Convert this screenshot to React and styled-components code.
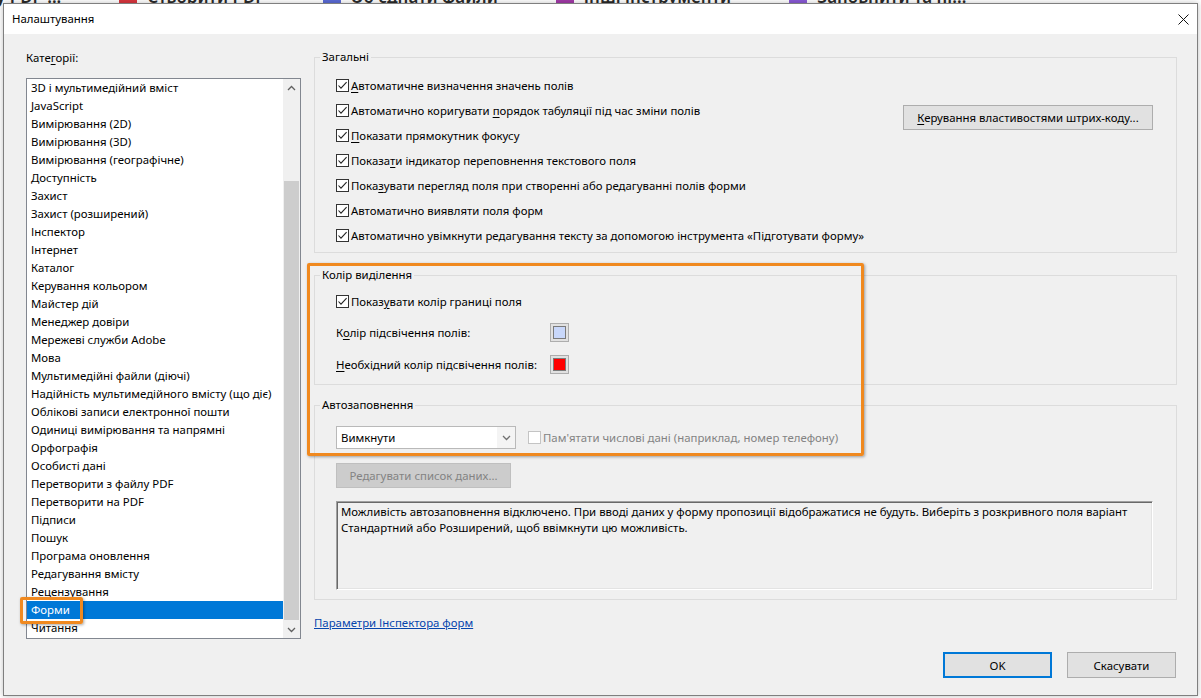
import React from "react";
import styled, { createGlobalStyle } from "styled-components";

const UI_FONT = `"Noto Sans", "Segoe UI", Arial, sans-serif`;

const GlobalStyle = createGlobalStyle`
  html, body { margin: 0; padding: 0; background: #ffffff; }
  body { font-family: ${UI_FONT}; font-size: 11.4px; color: #000; }
  *, *::before, *::after { box-sizing: border-box; }
`;

/* ---------- desktop behind the dialog ---------- */

const Desktop = styled.div`
  position: relative;
  width: 1201px;
  height: 698px;
  overflow: hidden;
  background: #ffffff;
`;

const ToolStrip = styled.div`
  position: absolute;
  top: -15px;
  left: -4px;
  display: flex;
  align-items: center;
  gap: 58px;
  white-space: nowrap;
  font: 600 17px ${UI_FONT};
  color: #2b2b2b;
`;

const ToolItem = styled.span`
  display: inline-flex;
  align-items: center;
  gap: 10px;
`;

const ToolGlyph = styled.span`
  width: 18px;
  height: 16px;
  background: ${(p) => p.$color};
  border-radius: 2px;
`;

/* ---------- dialog window ---------- */

const Window = styled.div`
  position: absolute;
  left: 3px;
  top: 3px;
  width: 1195px;
  height: 693px;
  display: flex;
  flex-direction: column;
  background: #f0f0f0;
  border: 1px solid #7f7f7f;
  box-shadow: 0 0 6px rgba(0, 0, 0, 0.25);
`;

const TitleBar = styled.div`
  height: 30px;
  flex: none;
  display: flex;
  align-items: center;
  justify-content: space-between;
  padding: 0 8px 0 8px;
  background: #ffffff;
`;

const Title = styled.span`
  line-height: 16px;
  margin-top: -1px;
`;

const Body = styled.div`
  flex: 1;
  display: flex;
  padding: 16px 20px 0 22px;
  min-height: 0;
`;

const Sidebar = styled.div`
  width: 275px;
  flex: none;
  display: flex;
  flex-direction: column;
`;

const Label = styled.div`
  line-height: 16px;
`;

const ListBox = styled.div`
  margin-top: 12px;
  height: 561px;
  display: flex;
  background: #ffffff;
  border: 1px solid #828790;
`;

const Items = styled.ul`
  flex: 1;
  margin: 0;
  padding: 0;
  list-style: none;
  overflow: hidden;
`;

const Item = styled.li`
  height: 18px;
  line-height: 18px;
  padding-left: 4px;
  white-space: nowrap;
  color: ${(p) => (p.$selected ? "#ffffff" : "#000000")};
  background: ${(p) => (p.$selected ? "#0078d7" : "transparent")};
`;

const ScrollBar = styled.div`
  width: 17px;
  flex: none;
  display: flex;
  flex-direction: column;
  background: #f0f0f0;
`;

const ScrollArrow = styled.div`
  height: 17px;
  flex: none;
  display: flex;
  align-items: center;
  justify-content: center;
`;

const ScrollTrack = styled.div`
  flex: 1;
  display: flex;
  flex-direction: column;
  padding: 85px 1px 1px 1px;
`;

const ScrollThumb = styled.div`
  flex: 1;
  background: #cdcdcd;
`;

const Main = styled.div`
  flex: 1;
  margin-left: 13px;
  margin-top: -1px;
  display: flex;
  flex-direction: column;
`;

const Group = styled.fieldset`
  margin: ${(p) => p.$gap || 0}px 0 0 0;
  padding: 0;
  min-width: 0;
  border: 1px solid #dcdcdc;
`;

const Legend = styled.legend`
  margin-left: 5px;
  padding: 0 2px;
  line-height: 16px;
`;

const GroupBody = styled.div`
  padding: ${(p) => p.$pad || "8px 23px 4px 21px"};
  display: flex;
  flex-direction: ${(p) => (p.$row ? "row" : "column")};
  justify-content: ${(p) => (p.$row ? "space-between" : "flex-start")};
  align-items: flex-start;
`;

const Stack = styled.div`
  display: flex;
  flex-direction: column;
`;

const CheckRow = styled.label`
  height: 25px;
  display: flex;
  align-items: center;
  gap: 2px;
  white-space: nowrap;
  color: ${(p) => (p.$disabled ? "#838383" : "#000")};
`;

const Box = styled.span`
  width: 13px;
  height: 13px;
  flex: none;
  display: inline-flex;
  align-items: center;
  justify-content: center;
  background: #ffffff;
  border: 1px solid ${(p) => (p.$disabled ? "#c4c4c4" : "#333333")};
`;

const Key = styled.span`
  text-decoration: underline;
  text-underline-offset: 2px;
`;

const Button = styled.div`
  height: ${(p) => p.$h || 25}px;
  width: ${(p) => (p.$w ? `${p.$w}px` : "auto")};
  padding: 0 ${(p) => (p.$w ? 0 : 10)}px;
  display: inline-flex;
  align-items: center;
  justify-content: center;
  white-space: nowrap;
  background: ${(p) => (p.$disabled ? "#cccccc" : "#e1e1e1")};
  color: ${(p) => (p.$disabled ? "#838383" : "#000")};
  border: 1px solid
    ${(p) => (p.$default ? "#0078d7" : p.$disabled ? "#bfbfbf" : "#adadad")};
  box-shadow: ${(p) => (p.$default ? "inset 0 0 0 1px #0078d7" : "none")};
`;

const BarcodeButton = styled(Button)`
  margin-top: 32px;
  width: 250px;
`;

const ColorRow = styled.div`
  height: 32px;
  display: flex;
  align-items: center;
  margin-top: ${(p) => p.$gap || 0}px;
`;

const ColorLabel = styled.span`
  width: 214px;
  flex: none;
`;

const Swatch = styled.span`
  width: 19px;
  height: 19px;
  display: inline-flex;
  align-items: center;
  justify-content: center;
  background: #e1e1e1;
  border: 1px solid #adadad;
`;

const SwatchFill = styled.span`
  width: 13px;
  height: 13px;
  background: ${(p) => p.$color};
  border: 1px solid #7a7a7a;
`;

const ComboRow = styled.div`
  display: flex;
  align-items: center;
  gap: 12px;
`;

const Combo = styled.div`
  width: 180px;
  height: 23px;
  display: flex;
  align-items: stretch;
  background: #ffffff;
  border: 1px solid #b9b9b9;
`;

const ComboText = styled.span`
  flex: 1;
  display: flex;
  align-items: center;
  padding-left: 4px;
`;

const ComboArrow = styled.span`
  width: 18px;
  flex: none;
  display: flex;
  align-items: center;
  justify-content: center;
  background: #f4f4f4;
`;

const EditButton = styled(Button)`
  margin-top: 13px;
  width: 175px;
`;

const Notes = styled.div`
  margin-top: 13px;
  align-self: stretch;
  height: 89px;
  padding: 2px 4px;
  line-height: 16px;
  white-space: nowrap;
  overflow: hidden;
  background: #f0f0f0;
  border: 1px solid;
  border-color: #a0a0a0 #ffffff #ffffff #a0a0a0;
  box-shadow: inset 1px 1px 0 #696969, inset -1px -1px 0 #e3e3e3;
`;

const Link = styled.a`
  margin-top: 15px;
  line-height: 16px;
  color: #0645ad;
  text-decoration: underline;
  align-self: flex-start;
  cursor: pointer;
`;

const Footer = styled.div`
  flex: none;
  display: flex;
  justify-content: flex-end;
  gap: 15px;
  padding: 0 21px 17px 0;
`;

/* orange callouts drawn over the dialog */
const Callout = styled.div`
  position: absolute;
  left: ${(p) => p.$x}px;
  top: ${(p) => p.$y}px;
  width: ${(p) => p.$w}px;
  height: ${(p) => p.$h}px;
  border: 3px solid #f0891f;
  border-radius: 2px;
  box-shadow: 1px 1px 3px rgba(0, 0, 0, 0.35);
  pointer-events: none;
`;

/* ---------- small drawings ---------- */

const CheckMark = () => (
  <svg width="11" height="11" viewBox="0 0 11 11">
    <polyline
      points="1.5,5.5 4,8.2 9.6,2.2"
      fill="none"
      stroke="#222"
      strokeWidth="1.1"
    />
  </svg>
);

const Chevron = ({ up, color = "#606060" }) => (
  <svg width="9" height="6" viewBox="0 0 9 6">
    <polyline
      points={up ? "1,5 4.5,1.5 8,5" : "1,1 4.5,4.5 8,1"}
      fill="none"
      stroke={color}
      strokeWidth="1.3"
    />
  </svg>
);

const CloseIcon = () => (
  <svg width="11" height="11" viewBox="0 0 11 11" style={{ marginTop: 1 }}>
    <path d="M0.5 0.5 L10.5 10.5 M10.5 0.5 L0.5 10.5" stroke="#111" strokeWidth="1" />
  </svg>
);

const Check = ({ children, disabled, checked = true }) => (
  <CheckRow $disabled={disabled}>
    <Box $disabled={disabled}>{checked && <CheckMark />}</Box>
    <span>{children}</span>
  </CheckRow>
);

const categories = [
  "3D і мультимедійний вміст",
  "JavaScript",
  "Вимірювання (2D)",
  "Вимірювання (3D)",
  "Вимірювання (географічне)",
  "Доступність",
  "Захист",
  "Захист (розширений)",
  "Інспектор",
  "Інтернет",
  "Каталог",
  "Керування кольором",
  "Майстер дій",
  "Менеджер довіри",
  "Мережеві служби Adobe",
  "Мова",
  "Мультимедійні файли (діючі)",
  "Надійність мультимедійного вмісту (що діє)",
  "Облікові записи електронної пошти",
  "Одиниці вимірювання та напрямні",
  "Орфографія",
  "Особисті дані",
  "Перетворити з файлу PDF",
  "Перетворити на PDF",
  "Підписи",
  "Пошук",
  "Програма оновлення",
  "Редагування вмісту",
  "Рецензування",
  "Форми",
  "Читання",
];

export default function App() {
  const selected = "Форми";
  return (
    <Desktop>
      <GlobalStyle />
      <ToolStrip>
        <ToolItem>у PDF-...</ToolItem>
        <ToolItem>
          <ToolGlyph $color="#d9363e" />
          Створити PDF
        </ToolItem>
        <ToolItem>
          <ToolGlyph $color="#5b6bd6" />
          Об'єднати файли
        </ToolItem>
        <ToolItem>
          <ToolGlyph $color="#a23aa8" />
          Інші інструменти
        </ToolItem>
        <ToolItem>
          <ToolGlyph $color="#8a5ad6" />
          Заповнити та пі...
        </ToolItem>
      </ToolStrip>

      <Window>
        <TitleBar>
          <Title>Налаштування</Title>
          <CloseIcon />
        </TitleBar>

        <Body>
          <Sidebar>
            <Label>
              Кате<Key>г</Key>орії:
            </Label>
            <ListBox>
              <Items>
                {categories.map((c) => (
                  <Item key={c} $selected={c === selected}>
                    {c}
                  </Item>
                ))}
              </Items>
              <ScrollBar>
                <ScrollArrow>
                  <Chevron up />
                </ScrollArrow>
                <ScrollTrack>
                  <ScrollThumb />
                </ScrollTrack>
                <ScrollArrow>
                  <Chevron />
                </ScrollArrow>
              </ScrollBar>
            </ListBox>
          </Sidebar>

          <Main>
            <Group>
              <Legend>Загальні</Legend>
              <GroupBody $row>
                <Stack>
                  <Check>
                    <Key>А</Key>втоматичне визначення значень полів
                  </Check>
                  <Check>
                    Автоматично коригувати <Key>п</Key>орядок табуляції під час зміни полів
                  </Check>
                  <Check>
                    <Key>П</Key>оказати прямокутник фокусу
                  </Check>
                  <Check>
                    Показа<Key>т</Key>и індикатор переповнення текстового поля
                  </Check>
                  <Check>
                    Пока<Key>з</Key>увати перегляд поля при створенні або редагуванні полів форми
                  </Check>
                  <Check>Автоматично виявляти поля форм</Check>
                  <Check>
                    Автоматично увімкнути редагування тексту за допомогою інструмента «Підготувати форму»
                  </Check>
                </Stack>
                <BarcodeButton>
                  <span>
                    <Key>К</Key>ерування властивостями штрих-коду...
                  </span>
                </BarcodeButton>
              </GroupBody>
            </Group>

            <Group $gap={14}>
              <Legend>Колір виділення</Legend>
              <GroupBody $pad="6px 23px 4px 21px">
                <Check>
                  Показ<Key>у</Key>вати колір границі поля
                </Check>
                <ColorRow $gap={2}>
                  <ColorLabel>
                    К<Key>о</Key>лір підсвічення полів:
                  </ColorLabel>
                  <Swatch>
                    <SwatchFill $color="#c8d7fa" />
                  </Swatch>
                </ColorRow>
                <ColorRow>
                  <ColorLabel>
                    <Key>Н</Key>еобхідний колір підсвічення полів:
                  </ColorLabel>
                  <Swatch>
                    <SwatchFill $color="#ff0000" />
                  </Swatch>
                </ColorRow>
              </GroupBody>
            </Group>

            <Group $gap={12}>
              <Legend>Автозаповнення</Legend>
              <GroupBody $pad="12px 23px 9px 21px">
                <ComboRow>
                  <Combo>
                    <ComboText>Вимкнути</ComboText>
                    <ComboArrow>
                      <Chevron color="#707070" />
                    </ComboArrow>
                  </Combo>
                  <Check disabled checked={false}>
                    Пам'ятати числові дані (наприклад, номер телефону)
                  </Check>
                </ComboRow>
                <EditButton $disabled>Редагувати список даних...</EditButton>
                <Notes>
                  Можливість автозаповнення відключено. При вводі даних у форму пропозиції
                  відображатися не будуть. Виберіть з розкривного поля варіант
                  <br />
                  Стандартний або Розширений, щоб ввімкнути цю можливість.
                </Notes>
              </GroupBody>
            </Group>

            <Link>Параметри Інспектора форм</Link>
          </Main>
        </Body>

        <Footer>
          <Button $default $w={109} $h={26}>
            OK
          </Button>
          <Button $w={109} $h={26}>
            Скасувати
          </Button>
        </Footer>

        <Callout $x={16} $y={593} $w={63} $h={27} />
        <Callout $x={303} $y={259} $w={557} $h={193} />
      </Window>
    </Desktop>
  );
}
